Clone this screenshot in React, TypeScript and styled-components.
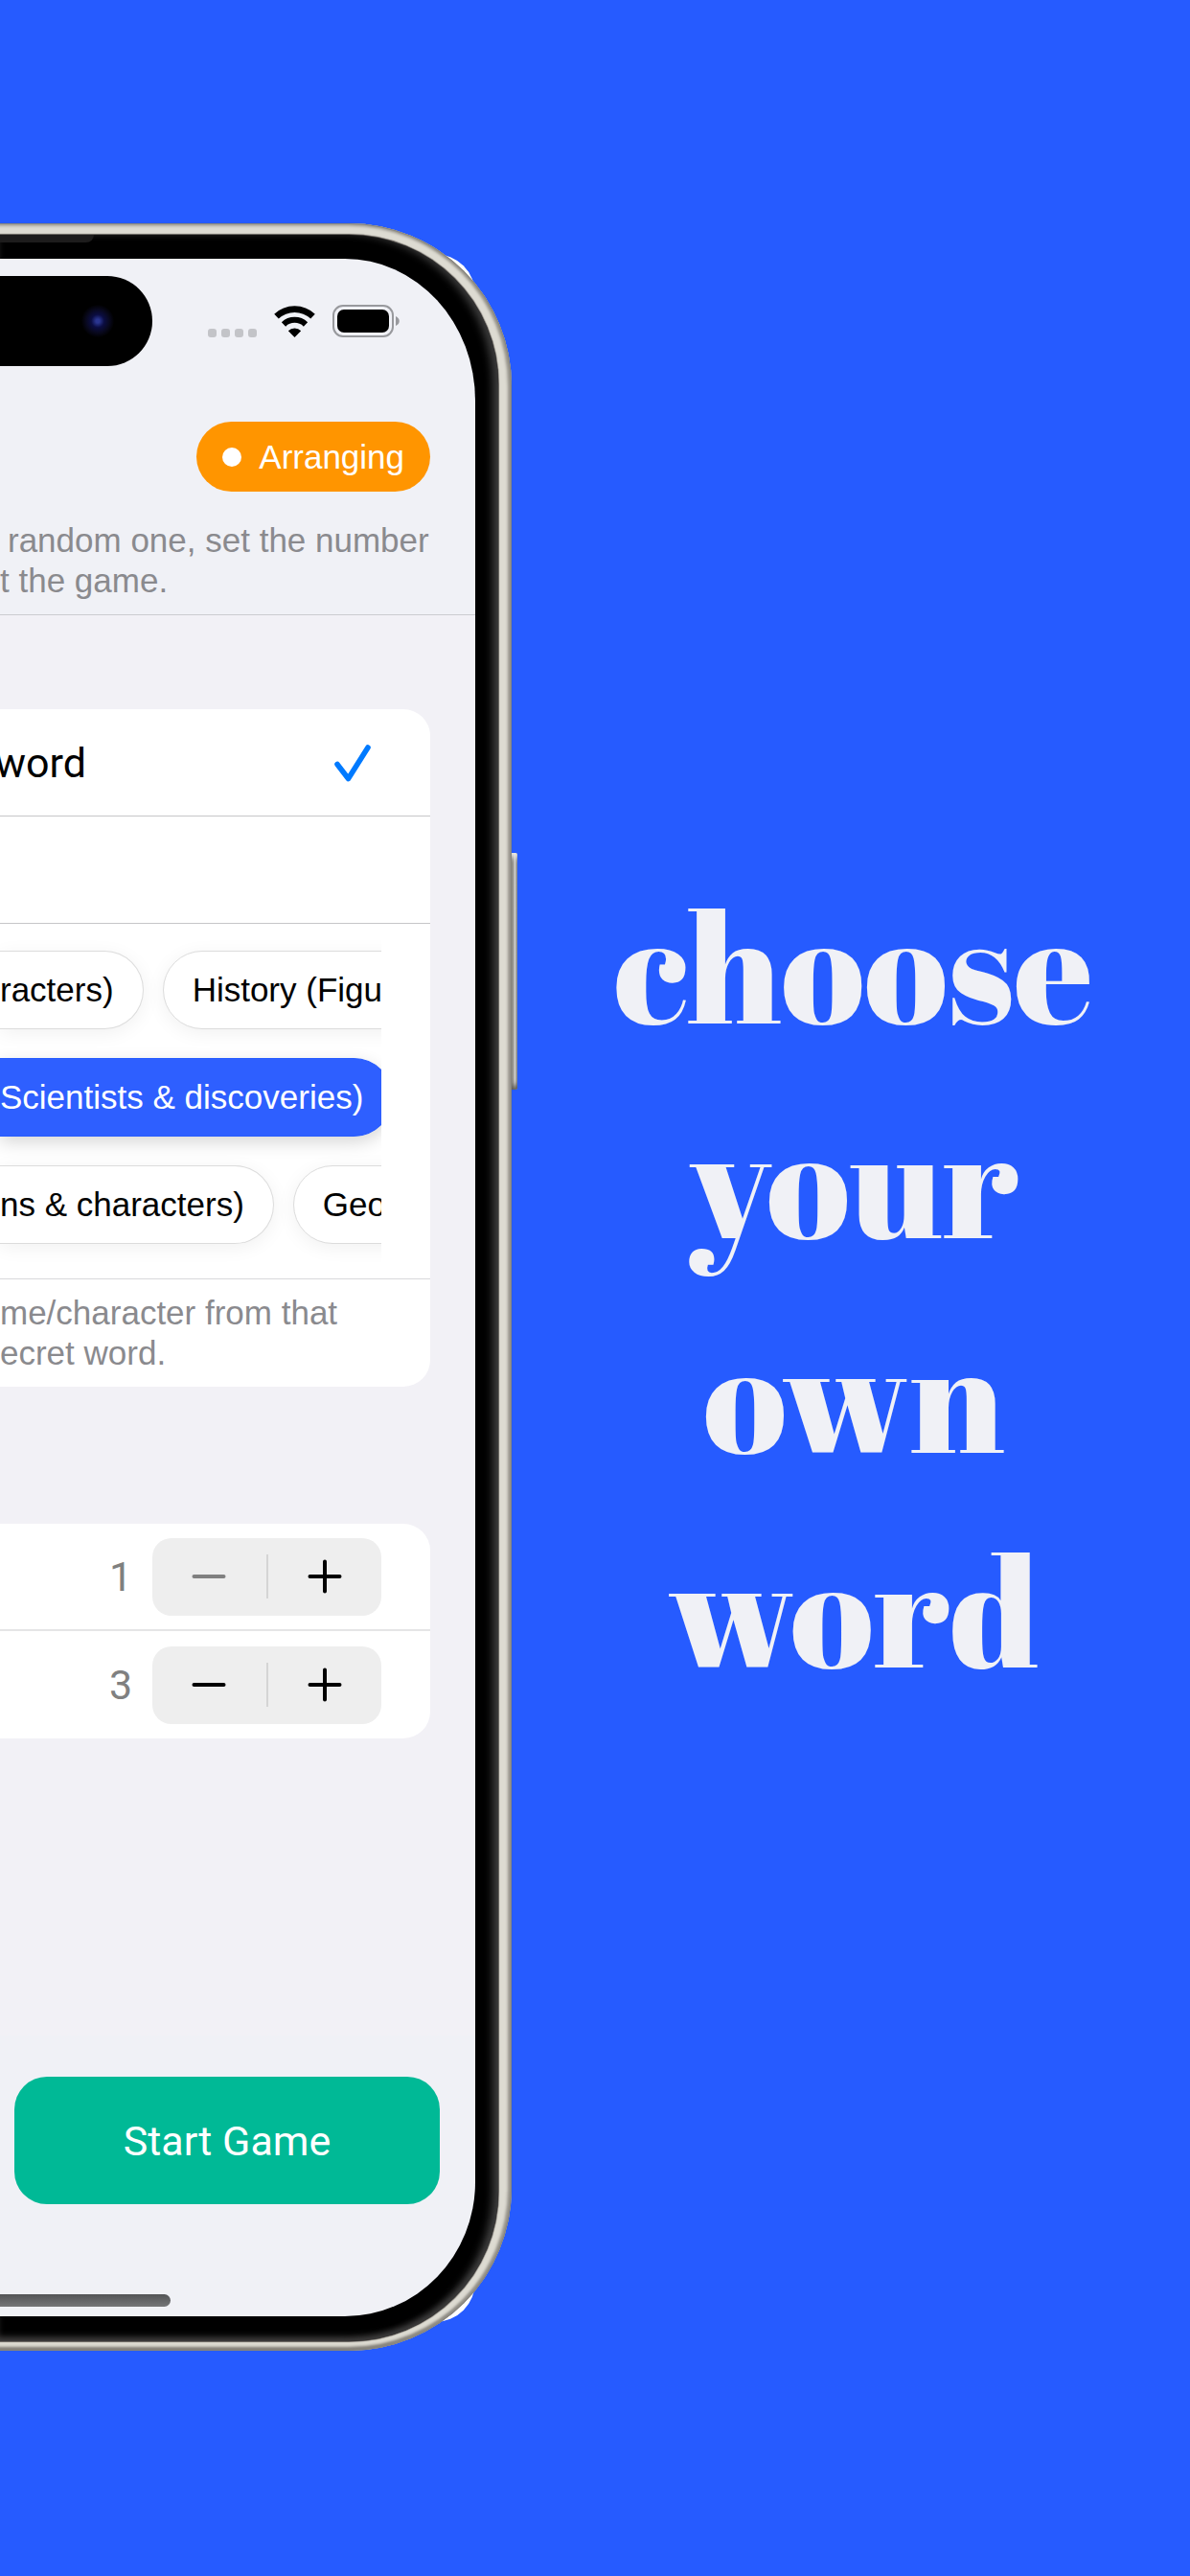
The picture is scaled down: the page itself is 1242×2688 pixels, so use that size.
import React, { useState } from "react";
import styled, { createGlobalStyle, css } from "styled-components";

const sans = `"Liberation Sans", Arial, Helvetica, sans-serif`;
const system = `Roboto, "Liberation Sans", sans-serif`;

const GlobalStyle = createGlobalStyle`
  *, *::before, *::after { box-sizing: border-box; }
  body { margin: 0; background: #265bff; font-family: ${sans}; }
  button { border: 0; padding: 0; background: none; color: inherit; font: inherit; cursor: pointer; }
`;

const Page = styled.main`
  display: grid;
  grid-template-columns: 43% 57%;
  align-items: center;
  min-height: 100vh;
  padding-bottom: 2px;
  overflow: hidden;
  background: #265bff;
`;

/* ---------- Device ---------- */

const Device = styled.section`
  position: relative;
  isolation: isolate;

  &::before {
    content: "";
    position: absolute;
    z-index: -1;
    inset: 32px 38px 30px 0;
    border-radius: 0 42px 42px 0;
    background: #fff;
  }
`;

const SideButton = styled.div`
  position: absolute;
  z-index: -1;
  top: 657px;
  right: -6px;
  width: 12px;
  height: 247px;
  border-radius: 0 2px 2px 0;
  background: linear-gradient(90deg, #8e8c86 0 60%, #d3d3cf 78%, #77777a);
  box-shadow: inset 0 -8px 6px -4px #5c5a55, inset 0 8px 6px -4px #f1f0ec;
`;

const Frame = styled.div`
  margin-left: -20px;
  padding: 12px 14px 10px 20px;
  border-radius: 0 170px 170px 0;
  background: #dddbd2;
  box-shadow:
    inset 0 0 1px 1px #85837d,
    inset -4px 0 3px 0 #98958d,
    inset 0 -4px 3px 0 #7f7c75,
    inset 0 3px 3px 0 #aaa8a0;
`;

const Bezel = styled.div`
  padding: 0 24px 26px 0;
  border-radius: 0 156px 156px 0;
  background: #000;
  box-shadow:
    0 0 1px 1px #5d5955,
    inset -8px 0 8px -2px #3c3c3c,
    inset 0 -7px 7px -3px #454343;
`;

const Earpiece = styled.div`
  width: 98px;
  height: 8px;
  margin-bottom: 17px;
  border-radius: 0 0 8px 0;
  background: #1d1c1c;
`;

const Screen = styled.div`
  display: flex;
  flex-direction: column;
  overflow: hidden;
  border-radius: 0 136px 136px 0 / 0 148px 140px 0;
  background: #f0f1f6;
`;

const StatusBar = styled.div`
  display: flex;
  align-items: center;
  justify-content: space-between;
  padding: 18px 79px 0 0;
`;

const Island = styled.div`
  display: flex;
  align-items: center;
  justify-content: flex-end;
  width: 159px;
  height: 94px;
  padding-right: 40px;
  border-radius: 0 47px 47px 0;
  background: #000;
`;

const Lens = styled.div`
  width: 34px;
  height: 34px;
  border-radius: 50%;
  background: radial-gradient(circle, #2a3590 0 8%, #0b0d42 28%, #08081c 52%, #000 72%);
`;

const Indicators = styled.div`
  display: flex;
  align-items: flex-end;
  gap: 18px;
`;

const Signal = styled.div`
  display: flex;
  gap: 5px;
`;

const SignalDot = styled.i`
  width: 9px;
  height: 9px;
  border-radius: 3px;
  background: #c3c4c8;
`;

/* ---------- Header ---------- */

const Header = styled.header`
  display: flex;
  flex-direction: column;
  gap: 30px;
  padding: 58px 0 14px;
  border-bottom: 1px solid #cbccd0;
`;

const Badge = styled.span`
  display: flex;
  align-items: center;
  align-self: flex-end;
  gap: 18px;
  height: 73px;
  margin-right: 47px;
  padding: 0 27px;
  border-radius: 37px;
  background: #ff9500;
  color: #fff;
  font-size: 35px;

  &::before {
    content: "";
    width: 20px;
    height: 20px;
    border-radius: 50%;
    background: #fff;
  }
`;

const Note = styled.p<{ $inset?: boolean }>`
  margin: 0;
  color: #8a8a8e;
  font-size: 35px;
  line-height: 42px;
  white-space: nowrap;

  span {
    display: block;
  }

  ${(p) =>
    p.$inset &&
    css`
      span:first-child {
        padding-left: 8px;
      }
    `}
`;

/* ---------- Settings ---------- */

const Body = styled.div`
  display: flex;
  flex-direction: column;
  gap: 143px;
  padding: 98px 47px 310px 0;
  background: #f2f1f6;
`;

const Card = styled.section`
  overflow: hidden;
  border-radius: 0 28px 28px 0;
  background: #fff;
`;

const Row = styled.div`
  display: flex;
  align-items: center;
  justify-content: space-between;
  width: 100%;
  height: 112px;
  padding-right: 51px;

  &:not(:last-child) {
    border-bottom: 1px solid #c6c6c8;
  }
`;

const RowTitle = styled.span`
  display: flex;
  justify-content: flex-end;
  width: 90px;
  overflow: hidden;
  font-family: ${system};
  font-size: 43px;
`;

const ChipStrip = styled.div`
  display: flex;
  flex-direction: column;
  gap: 30px;
  margin-right: 51px;
  padding: 28px 0 36px;
  overflow: hidden;
`;

const ChipLine = styled.div`
  display: flex;
  gap: 20px;
`;

const Chip = styled.button<{ $cut?: boolean; $active?: boolean }>`
  flex: none;
  height: 82px;
  padding: 0 30px;
  border: 1px solid #dcdcdc;
  border-radius: 41px;
  background: #fff;
  box-shadow: 0 4px 20px rgba(0, 0, 0, 0.06);
  color: #000;
  font-size: 35px;
  white-space: nowrap;

  ${(p) =>
    p.$cut &&
    css`
      padding-left: 0;
      border-left: 0;
      border-radius: 0 41px 41px 0;
    `}

  ${(p) =>
    p.$active &&
    css`
      border-color: #265bff;
      background: #2e5fff;
      box-shadow: 0 6px 18px rgba(0, 0, 0, 0.16);
      color: #fff;
    `}
`;

const Caption = styled.div`
  padding: 14px 0;
  border-top: 1px solid #d9d9db;
`;

const CountRow = styled.div`
  display: flex;
  align-items: center;
  justify-content: flex-end;
  gap: 21px;
  height: 112px;
  padding-right: 51px;

  &:not(:last-child) {
    border-bottom: 2px solid #e5e5e6;
  }
`;

const Count = styled.output`
  color: #808080;
  font-family: ${system};
  font-size: 43px;
`;

const StepperBox = styled.div`
  display: flex;
  align-items: center;
  width: 239px;
  height: 81px;
  border-radius: 20px;
  background: #eee;
`;

const StepButton = styled.button`
  display: flex;
  flex: 1;
  align-items: center;
  justify-content: center;
  height: 100%;
  color: #000;

  &:disabled {
    color: #808080;
  }
`;

const StepDivider = styled.i`
  width: 2px;
  height: 46px;
  background: #d5d5d5;
`;

/* ---------- Footer ---------- */

const Footer = styled.footer`
  display: flex;
  flex-direction: column;
  gap: 94px;
  padding: 43px 37px 10px 0;
`;

const StartButton = styled.button`
  height: 133px;
  margin-left: 15px;
  border-radius: 34px;
  background: #00b996;
  color: #fff;
  font-family: ${system};
  font-size: 43px;
`;

const HomeIndicator = styled.div`
  width: 178px;
  height: 13px;
  border-radius: 0 7px 7px 0;
  background: linear-gradient(#535456, #757678);
`;

/* ---------- Headline ---------- */

const Headline = styled.h1`
  margin: 0;
  padding-left: 6px;
  color: #f0f1f6;
  font-family: "Abril Fatface", "Liberation Serif", "Times New Roman", serif;
  font-size: 160px;
  font-weight: 400;
  line-height: 224px;
  text-align: center;

  span {
    display: block;
  }
`;

const WifiIcon = () => (
  <svg width="43" height="33" viewBox="0 0 43 33" fill="none" aria-label="Wi-Fi">
    <path d="M2.5 11.2a27.5 27.5 0 0 1 38 0" stroke="#000" strokeWidth="6.6" />
    <path d="M10 19.4a16.6 16.6 0 0 1 23 0" stroke="#000" strokeWidth="6.2" />
    <path d="M14.8 26.2a10 10 0 0 1 13.4 0L21.5 33z" fill="#000" />
  </svg>
);

const BatteryIcon = () => (
  <svg width="70" height="34" viewBox="0 0 70 34" aria-label="Battery">
    <rect x="1" y="1" width="62" height="32" rx="10" fill="none" stroke="#98999d" strokeWidth="2" />
    <rect x="5" y="5" width="54" height="24" rx="7" fill="#000" />
    <path d="M66 12c5 2 5 8 0 10z" fill="#98999d" />
  </svg>
);

const CheckIcon = () => (
  <svg width="58" height="44" viewBox="0 0 58 44" fill="none" aria-hidden="true">
    <path
      d="M12 23.5 23.5 38.5 44 6"
      stroke="#007aff"
      strokeWidth="5.6"
      strokeLinecap="round"
      strokeLinejoin="round"
    />
  </svg>
);

const StepIcon = ({ plus }: { plus?: boolean }) => (
  <svg width="36" height="36" viewBox="0 0 36 36" fill="none" aria-hidden="true">
    <path
      d={plus ? "M2.5 18h31M18 2.5v31" : "M2.5 18h31"}
      stroke="currentColor"
      strokeWidth="4"
      strokeLinecap="round"
    />
  </svg>
);

function Stepper({ initial, label }: { initial: number; label: string }) {
  const [value, setValue] = useState(initial);
  return (
    <CountRow>
      <Count>{value}</Count>
      <StepperBox role="group" aria-label={label}>
        <StepButton aria-label="Decrease" disabled={value <= 1} onClick={() => setValue(value - 1)}>
          <StepIcon />
        </StepButton>
        <StepDivider />
        <StepButton aria-label="Increase" onClick={() => setValue(value + 1)}>
          <StepIcon plus />
        </StepButton>
      </StepperBox>
    </CountRow>
  );
}

const chipLines = [
  ["racters)", "History (Figures)"],
  ["Scientists & discoveries)"],
  ["ns & characters)", "Geography"],
];

export default function App() {
  const [active, setActive] = useState("Scientists & discoveries)");

  return (
    <>
      <GlobalStyle />
      <Page>
        <Device>
          <SideButton />
          <Frame>
            <Bezel>
              <Earpiece />
              <Screen>
                <StatusBar>
                  <Island>
                    <Lens />
                  </Island>
                  <Indicators>
                    <Signal>
                      <SignalDot />
                      <SignalDot />
                      <SignalDot />
                      <SignalDot />
                    </Signal>
                    <WifiIcon />
                    <BatteryIcon />
                  </Indicators>
                </StatusBar>

                <Header>
                  <Badge>Arranging</Badge>
                  <Note $inset>
                    <span>random one, set the number</span>
                    <span>t the game.</span>
                  </Note>
                </Header>

                <Body>
                  <Card>
                    <Row as="button" aria-pressed="true">
                      <RowTitle>word</RowTitle>
                      <CheckIcon />
                    </Row>
                    <Row />
                    <ChipStrip>
                      {chipLines.map((line) => (
                        <ChipLine key={line[0]}>
                          {line.map((name, i) => (
                            <Chip
                              key={name}
                              $cut={i === 0}
                              $active={name === active}
                              aria-pressed={name === active}
                              onClick={() => setActive(name)}
                            >
                              {name}
                            </Chip>
                          ))}
                        </ChipLine>
                      ))}
                    </ChipStrip>
                    <Caption>
                      <Note>
                        <span>me/character from that</span>
                        <span>ecret word.</span>
                      </Note>
                    </Caption>
                  </Card>

                  <Card>
                    <Stepper initial={1} label="First count" />
                    <Stepper initial={3} label="Second count" />
                  </Card>
                </Body>

                <Footer>
                  <StartButton>Start Game</StartButton>
                  <HomeIndicator />
                </Footer>
              </Screen>
            </Bezel>
          </Frame>
        </Device>

        <Headline>
          <span>choose</span>
          <span>your</span>
          <span>own</span>
          <span>word</span>
        </Headline>
      </Page>
    </>
  );
}
